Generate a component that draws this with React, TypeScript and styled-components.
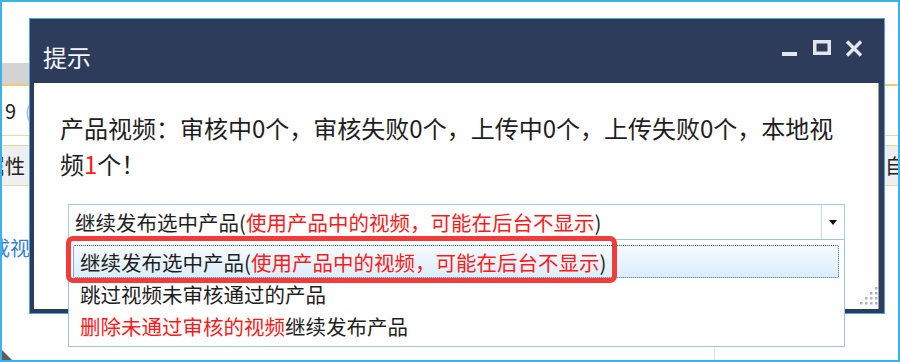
import React from "react";
import styled, { createGlobalStyle, css } from "styled-components";

const GlobalStyle = createGlobalStyle`
  html, body {
    margin: 0;
    padding: 0;
    background: #fff;
  }
  body {
    font-family: "Noto Sans CJK SC", "Noto Sans", sans-serif;
  }
`;

const Frame = styled.div`
  position: relative;
  width: 900px;
  height: 362px;
  box-sizing: border-box;
  border: 2px solid #3cb2ea;
  background: #fff;
  overflow: hidden;
`;

/* background page behind the dialog */
const Page = styled.div`
  display: flex;
  flex-direction: column;
  height: 100%;
  font-size: 20px;
  color: #222;
`;

const TopBlank = styled.div`
  height: 61px;
`;

const HeadBand = styled.div`
  display: flex;
  height: 21px;
  border-bottom: 2px solid #f2c870;
`;

const GreyCell = styled.div`
  width: 240px;
  background: #d3d3d3;
`;

const Row = styled.div<{ $h: number; $bg?: string }>`
  display: flex;
  align-items: center;
  justify-content: space-between;
  height: ${(p) => p.$h}px;
  background: ${(p) => p.$bg || "transparent"};
  border-bottom: 1px solid #efd79c;
  padding-left: 3px;
  white-space: nowrap;
`;

const Faint = styled.span`
  color: #9fb8cc;
  margin-left: 9px;
  font-size: 18px;
`;

const ClippedLeft = styled.span<{ $shift: number }>`
  margin-left: ${(p) => p.$shift}px;
`;

const ClippedRight = styled.span`
  margin-right: -27px;
`;

const LinkRow = styled.div`
  display: flex;
  align-items: center;
  height: 30px;
  margin-top: 46px;
  color: #3d7fd6;
  white-space: nowrap;
`;

const Spacer = styled.div`
  flex: 1;
`;

const Footer = styled.div`
  display: flex;
  align-items: flex-end;
  height: 12px;
`;

const CornerMark = styled.div`
  width: 0;
  height: 0;
  border-left: 10px solid #5c5c5c;
  border-top: 10px solid transparent;
`;

const FooterDivider = styled.div`
  width: 1px;
  height: 12px;
  margin-left: 702px;
  background: #e2e2e2;
`;

/* the dialog */
const Dialog = styled.div`
  position: absolute;
  left: 27px;
  top: 16px;
  width: 856px;
  height: 296px;
  box-sizing: border-box;
  border: 1px solid #4aa6e4;
  background: #2e3c5b;
  display: flex;
  flex-direction: column;
  z-index: 2;
`;

const TitleBar = styled.div`
  display: flex;
  align-items: flex-start;
  height: 64px;
  flex-shrink: 0;
  padding: 0 21px 0 13px;
`;

const Title = styled.div`
  margin-top: 26px;
  font-size: 24px;
  line-height: 1;
  color: #f3f5f8;
`;

const Controls = styled.div`
  display: flex;
  align-items: flex-start;
  margin-left: auto;
  margin-top: 21px;
  svg {
    display: block;
  }
`;

const CtrlButton = styled.div<{ $gap?: number }>`
  margin-right: ${(p) => p.$gap || 0}px;
`;

const Body = styled.div`
  position: relative;
  flex: 1;
  display: flex;
  flex-direction: column;
  margin: 0 5px 4px 4px;
  padding: 27px 33px 0 26px;
  box-sizing: border-box;
  background: #fff;
  border-right: 1px solid #9aa3ad;
`;

const Message = styled.p`
  margin: 0;
  font-size: 24px;
  line-height: 36px;
  color: #1e1e1e;
`;

const Red = styled.span`
  color: #ff1a1a;
`;

const Combo = styled.div`
  position: relative;
  display: flex;
  align-items: center;
  width: 777px;
  height: 36px;
  margin: 22px 0 0 8px;
  box-sizing: border-box;
  border: 1px solid #a8cbe4;
  background: #fff;
`;

const ComboText = styled.div`
  flex: 1;
  padding-left: 6px;
  font-size: 20.5px;
  color: #1e1e1e;
  white-space: nowrap;
`;

const ComboArrow = styled.div`
  align-self: stretch;
  width: 22px;
  display: flex;
  align-items: center;
  justify-content: center;
  border-left: 1px solid #c9dced;
`;

const Arrow = styled.div`
  width: 0;
  height: 0;
  border-left: 4.5px solid transparent;
  border-right: 4.5px solid transparent;
  border-top: 5px solid #111;
`;

const List = styled.div`
  position: absolute;
  left: -1px;
  top: 34px;
  width: 777px;
  height: 108px;
  box-sizing: border-box;
  border: 1px solid #9ec4e0;
  padding: 5px 5px 4px 4px;
  background: #fff;
  z-index: 3;
`;

const Item = styled.div<{ $selected?: boolean }>`
  display: flex;
  align-items: center;
  height: 32px;
  box-sizing: border-box;
  padding-left: 6px;
  border: 1px solid transparent;
  font-size: 20.5px;
  color: #1e1e1e;
  white-space: nowrap;
  ${(p) =>
    p.$selected &&
    css`
      height: 33px;
      border: 1px dotted #2b5e9c;
      border-radius: 2px;
      background: linear-gradient(#f5fbff, #dbedfb);
    `}
`;

const Highlight = styled.div`
  position: absolute;
  left: -3px;
  top: -4px;
  width: 551px;
  height: 47px;
  box-sizing: border-box;
  border: 5px solid #f23b3b;
  border-radius: 7px;
  pointer-events: none;
`;

const Grip = styled.svg`
  display: block;
  margin-top: auto;
  align-self: flex-end;
  margin-bottom: 4px;
  margin-right: -33px;
`;

const GripDots = () => {
  const dots: React.ReactElement[] = [];
  const cols = [17, 12, 7, 2];
  [2, 7, 12, 17].forEach((y, row) => {
    for (let i = 0; i <= row; i++) {
      dots.push(<rect key={`${row}-${i}`} x={cols[i]} y={y} width="2.5" height="2.5" fill="#a6b6ca" />);
    }
  });
  return (
    <Grip width="20" height="20" viewBox="0 0 20 20">
      {dots}
    </Grip>
  );
};

const Choice = () => (
  <>
    继续发布选中产品(<Red>使用产品中的视频，可能在后台不显示</Red>)
  </>
);

export default function App() {
  return (
    <>
      <GlobalStyle />
      <Frame>
        <Page>
          <TopBlank />
          <HeadBand>
            <GreyCell />
          </HeadBand>
          <Row $h={49}>
            <span>
              9<Faint>(</Faint>
            </span>
          </Row>
          <Row $h={9} />
          <Row $h={39} $bg="#efefef">
            <ClippedLeft $shift={-20}>属性</ClippedLeft>
            <ClippedRight>自定</ClippedRight>
          </Row>
          <LinkRow>
            <ClippedLeft $shift={-32}>生成视频</ClippedLeft>
          </LinkRow>
          <Spacer />
          <Footer>
            <CornerMark />
            <FooterDivider />
          </Footer>
        </Page>

        <Dialog>
          <TitleBar>
            <Title>提示</Title>
            <Controls>
              <CtrlButton $gap={16}>
                <svg width="15" height="17" viewBox="0 0 15 17">
                  <rect x="0" y="12" width="15" height="4" fill="#e3e7ed" />
                </svg>
              </CtrlButton>
              <CtrlButton $gap={14}>
                <svg width="18" height="15" viewBox="0 0 18 15">
                  <rect x="1.75" y="1.75" width="14.5" height="11.5" fill="none" stroke="#e3e7ed" strokeWidth="3.5" />
                </svg>
              </CtrlButton>
              <CtrlButton>
                <svg width="18" height="17" viewBox="0 0 18 17">
                  <path d="M2 1.5 L16 15.5 M16 1.5 L2 15.5" stroke="#e3e7ed" strokeWidth="3.4" />
                </svg>
              </CtrlButton>
            </Controls>
          </TitleBar>
          <Body>
            <Message>
              产品视频：审核中0个，审核失败0个，上传中0个，上传失败0个，本地视频<Red>1</Red>个！
            </Message>
            <Combo>
              <ComboText>
                <Choice />
              </ComboText>
              <ComboArrow>
                <Arrow />
              </ComboArrow>
              <List>
                <Item $selected>
                  <Choice />
                </Item>
                <Item>跳过视频未审核通过的产品</Item>
                <Item>
                  <Red>删除未通过审核的视频</Red>继续发布产品
                </Item>
                <Highlight />
              </List>
            </Combo>
            <GripDots />
          </Body>
        </Dialog>
      </Frame>
    </>
  );
}
